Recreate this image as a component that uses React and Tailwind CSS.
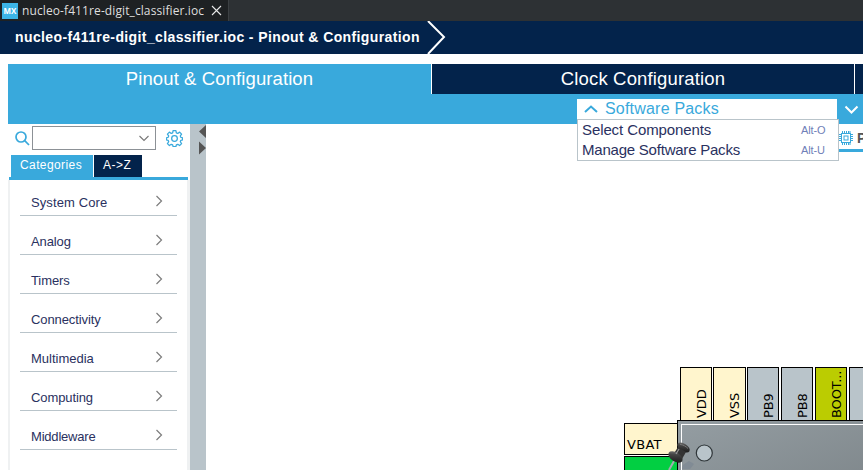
import React from "react";

const categories = [
  ["System Core", "tracking-[0.1px]"],
  ["Analog", "tracking-[-0.1px]"],
  ["Timers", "tracking-[-0.1px]"],
  ["Connectivity", "tracking-[-0.1px]"],
  ["Multimedia", ""],
  ["Computing", "tracking-[-0.1px]"],
  ["Middleware", "tracking-[-0.2px]"],
];

const menuItems = [
  ["Select Components", "Alt-O", "tracking-[-0.1px]"],
  ["Manage Software Packs", "Alt-U", "tracking-[-0.22px]"],
];

const topPins = [
  { label: "VDD", cls: "left-[474px] w-[32px] bg-[#fff5cd]" },
  { label: "VSS", cls: "left-[507px] w-[33px] bg-[#fff5cd]" },
  { label: "PB9", cls: "left-[541px] w-[32px] bg-[#b9c4ca]" },
  { label: "PB8", cls: "left-[575px] w-[32px] bg-[#b9c4ca]" },
  { label: "BOOT...", cls: "left-[609px] w-[32px] bg-[#bbcc01]" },
  { label: "", cls: "left-[643px] w-[32px] bg-[#b9c4ca]" },
];

function TabBar() {
  return (
    <div className="flex h-[21px] bg-[#2d3134] font-['Open_Sans','Noto_Sans',sans-serif]">
      <div className="flex h-full w-[229px] items-center border-r border-[#3c4043] bg-[#1e2123] pl-[2px]">
        <div className="flex h-4 w-4 shrink-0 items-center justify-center bg-[#3cb4e6] text-[8px] font-bold text-white">MX</div>
        <span className="ml-1 w-[184px] whitespace-nowrap text-[12px] leading-[20px] tracking-[0.1px] text-[#dedede]">nucleo-f411re-digit_classifier.ioc</span>
        <svg className="ml-[5px]" width="11" height="11" viewBox="0 0 11 11" fill="none" stroke="#e8e8e8" strokeWidth="1.1">
          <path d="M1 1l9 9M10 1l-9 9" />
        </svg>
      </div>
    </div>
  );
}

function Gear() {
  return (
    <svg width="17" height="17" viewBox="0 0 24 24" fill="none" stroke="#39a9dc" strokeWidth="1.800" strokeLinejoin="round">
      <circle cx="12" cy="12" r="4" />
      <path d="M10 1h4l.6 3 2 .8L19.200 3l2.800 2.800-1.800 2.600.8 2 2.500.6v3l-2.500.6-.8 2 1.800 2.600L19.200 22l-2.600-1.800-2 .8-.6 2.500h-4L9.400 21l-2-.8L4.800 22 2 19.200l1.800-2.600-.8-2-2.500-.6v-3L3 10.400l.8-2L2 5.800 4.800 3l2.600 1.800 2-.8z" />
    </svg>
  );
}

function Sidebar() {
  return (
    <aside className="flex h-[346px] w-[182px] flex-col">
      <div className="flex h-[31px] items-start pl-[7px] pt-[2px]">
        <svg className="mt-[5px]" width="15" height="15" viewBox="0 0 15 15" fill="none" stroke="#39a9dc" strokeWidth="1.700">
          <circle cx="6" cy="6" r="5" />
          <path d="M9.700 9.700l4.300 4.300" />
        </svg>
        <div className="ml-[2px] flex h-6 w-[124px] items-center justify-end border border-[#8c9196] pr-[5px]">
          <svg width="12" height="7" viewBox="0 0 12 7" fill="none" stroke="#777" strokeWidth="1.1">
            <path d="M1.500 1L6 5.500 10.500 1" />
          </svg>
        </div>
        <div className="ml-[10px] mt-[4px]"><Gear /></div>
      </div>
      <div className="flex h-[22px] gap-px pl-[3px] font-['Liberation_Sans',Arial,sans-serif] text-[12px] leading-[20px] text-white">
        <div className="w-[82px] bg-[#39a9dc] pl-[9px] tracking-[0.4px]">Categories</div>
        <div className="w-12 bg-[#03234b] pl-[9px] tracking-[0.5px]">A-&gt;Z</div>
      </div>
      <div className="ml-px h-[3px] w-[179px] shrink-0 bg-[#39a9dc]" />
      <div className="flex-1 border-l-2 border-r-[3px] border-[#eff1f2] px-[10px]">
        {categories.map(([name, cls]) => (
          <div key={name} className="flex h-[39px] items-end border-b border-[#b9c4ca] first:h-9">
            <span className={"flex-1 pb-[4px] pl-[11px] font-['Liberation_Sans',Arial,sans-serif] text-[13px] leading-[17px] text-[#2a3160] " + cls}>{name}</span>
            <svg className="mb-[8px] mr-[14px]" width="8" height="12" viewBox="0 0 8 12" fill="none" stroke="#7d7d7d" strokeWidth="1.2">
              <path d="M1.500 1l5 5-5 5" />
            </svg>
          </div>
        ))}
      </div>
    </aside>
  );
}

function Canvas() {
  return (
    <div className="relative h-[346px] w-[657px] overflow-hidden bg-white font-['DejaVu_Sans',sans-serif] text-[13px] text-black">
      <div className="absolute left-[626px] top-0 flex h-[28px] w-[31px] items-center border-b-[3px] border-[#39a9dc] bg-white pl-[7px] pt-[3px]">
        <svg className="shrink-0" width="14" height="14" viewBox="0 0 14 14" fill="none" stroke="#39a9dc">
          <rect x="2.500" y="2.500" width="9" height="9" />
          <rect x="5" y="5" width="4" height="4" />
          <path d="M3.500 0v2M5.500 0v2M7.500 0v2M9.500 0v2M11 0v2M3.500 12v2M5.500 12v2M7.500 12v2M9.500 12v2M11 12v2M0 3.500h2M0 5.500h2M0 7.500h2M0 9.500h2M12 3.500h2M12 5.500h2M12 7.500h2M12 9.500h2" />
        </svg>
        <span className="ml-[4px] font-['Liberation_Sans',sans-serif] text-[14px] font-bold text-[#555]">P</span>
      </div>
      {topPins.map((p, i) => (
        <div key={i} className={"absolute top-[243px] flex h-[54px] justify-center overflow-hidden border border-black " + p.cls}>
          <span className="ml-[10px] rotate-180 whitespace-nowrap pt-[2px] leading-[15px] tracking-[-0.1px] [writing-mode:vertical-rl]">{p.label}</span>
        </div>
      ))}
      <div className="absolute left-[418px] top-[299px] h-8 w-[55px] border border-black bg-[#fff5cd] pl-[2px] pt-[12px] leading-[17px] tracking-[0.3px]">VBAT</div>
      <div className="absolute left-[418px] top-[332px] h-8 w-[55px] border border-black bg-[#02cf42]" />
      <div className="absolute left-[471px] top-[296px] h-[80px] w-[210px] border border-black bg-linear-to-br from-[#949da2] to-[#7c8488] pl-[3px] pt-[3px]">
        <div className="h-full border-l border-t border-white" />
      </div>
      <svg className="absolute left-[460px] top-[314px]" width="60" height="32" viewBox="0 0 60 32">
        <defs>
          <linearGradient id="pin" x1="0" y1="0" x2="1" y2="1">
            <stop offset="0" stopColor="#888" />
            <stop offset=".35" stopColor="#444" />
            <stop offset="1" stopColor="#111" />
          </linearGradient>
        </defs>
        <circle cx="38.300" cy="15" r="8" fill="#b9c4ca" stroke="#2e3538" strokeWidth="1.200" />
        <path d="M17 27l6-4 5 3-4 5h-8z" fill="#76828f" opacity=".5" />
        <path d="M8 23l-5 9" stroke="#a3abae" strokeWidth="2" />
        <ellipse cx="17.500" cy="9.500" rx="7" ry="3.800" transform="rotate(32 17.500 9.500)" fill="url(#pin)" />
        <path d="M12 9l8 5-4 7-9-4z" fill="#333" />
        <ellipse cx="9.500" cy="19" rx="8" ry="4.500" transform="rotate(32 9.500 19)" fill="url(#pin)" />
        <path d="M13 11l-3 5" stroke="#999" strokeWidth="1.200" fill="none" />
        <path d="M14 6.500c3 0 6 2 8 4" stroke="#777" fill="none" />
      </svg>
    </div>
  );
}

function SoftwarePacksMenu() {
  return (
    <div className="absolute left-[577px] top-[99px] w-[262px] font-['Liberation_Sans',Arial,sans-serif]">
      <div className="flex h-5 w-[260px] items-center bg-white pl-[7px]">
        <svg width="14" height="8" viewBox="0 0 14 8" fill="none" stroke="#39a9dc" strokeWidth="2">
          <path d="M1 7l6-5.500L13 7" />
        </svg>
        <span className="ml-[7px] text-[16px] leading-5 tracking-[0.2px] text-[#39a9dc]">Software Packs</span>
      </div>
      <div className="h-[42px] border border-[#b9c4ca] bg-white pl-1 pr-[12px]">
        {menuItems.map(([title, shortcut, cls]) => (
          <div key={title} className="flex h-5 items-center justify-between">
            <span className={"text-[15px] leading-5 text-[#2a3160] " + cls}>{title}</span>
            <span className="w-[25px] whitespace-nowrap text-[11px] tracking-[-0.1px] text-[#7080b8]">{shortcut}</span>
          </div>
        ))}
      </div>
    </div>
  );
}

export default function App() {
  return (
    <div className="relative h-[470px] w-[863px] overflow-hidden bg-white">
      <TabBar />
      <div className="flex h-[33px] items-start bg-[#03234b] pl-[15px] font-['Liberation_Sans',Arial,sans-serif]">
        <span className="w-[411px] whitespace-nowrap text-[14px] font-bold leading-8 tracking-[0.39px] text-white">nucleo-f411re-digit_classifier.ioc - Pinout &amp; Configuration</span>
        <svg width="20" height="33" viewBox="0 0 20 33" fill="none" stroke="white" strokeWidth="2">
          <path d="M2 0l16 16L2 33" />
        </svg>
      </div>
      <div className="ml-2 mt-[10px] h-[60px] bg-[#39a9dc] font-['Liberation_Sans',Arial,sans-serif] text-[18.500px] leading-[29px] text-white">
        <div className="flex h-[30px]">
          <div className="w-[423px] text-center tracking-[0.1px]">Pinout &amp; Configuration</div>
          <div className="w-[423px] border-l border-white bg-[#03234b] text-center tracking-[0.16px]">Clock Configuration</div>
          <div className="flex-1 border-l border-white bg-[#03234b]" />
        </div>
        <div className="flex h-[30px] items-center justify-end pr-[4px]">
          <svg width="15" height="9" viewBox="0 0 15 9" fill="none" stroke="white" strokeWidth="2">
            <path d="M1.500 1.500l6 6 6-6" />
          </svg>
        </div>
      </div>
      <div className="ml-2 flex h-[346px]">
        <Sidebar />
        <div className="w-4 shrink-0 bg-[#b9c4ca]">
          <svg width="16" height="32" viewBox="0 0 16 32" fill="#555">
            <path d="M16 1v13L9 7.500zM9 17.500l7 6.500-7 6.500z" />
          </svg>
        </div>
        <Canvas />
      </div>
      <SoftwarePacksMenu />
    </div>
  );
}
